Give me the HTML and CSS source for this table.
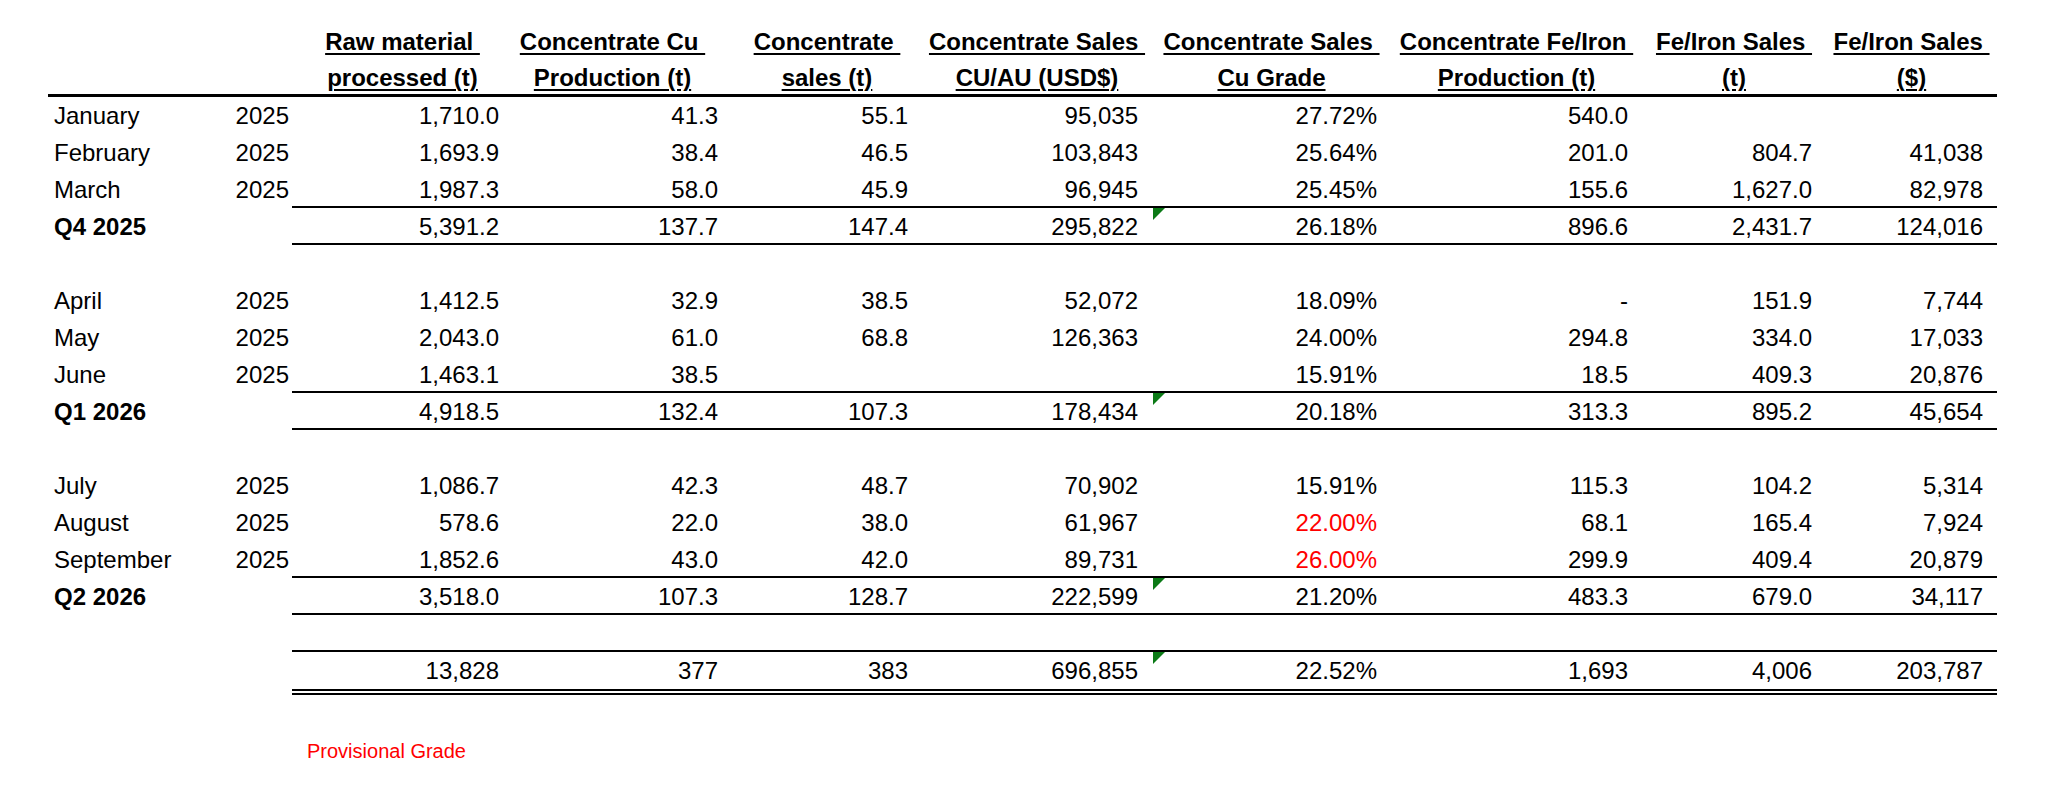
FILE: index.html
```html
<!DOCTYPE html>
<html lang="en">
<head>
<meta charset="utf-8">
<title>Production summary</title>
<link rel="stylesheet" href="styles.css">
</head>
<body>
<div class="sheet">
  <div class="row head">
    <div class="lbl"></div>
    <div class="yr"></div>
    <div class="vals">
      <div class="h"><span class="u">Raw material&nbsp;</span><br><span class="u">processed (t)</span></div>
      <div class="h h-cu"><span class="u">Concentrate Cu&nbsp;</span><br><span class="u">Production (t)</span></div>
      <div class="h"><span class="u">Concentrate&nbsp;</span><br><span class="u">sales (t)</span></div>
      <div class="h"><span class="u">Concentrate Sales&nbsp;</span><br><span class="u">CU/AU (USD$)</span></div>
      <div class="h"><span class="u">Concentrate Sales&nbsp;</span><br><span class="u">Cu Grade</span></div>
      <div class="h"><span class="u">Concentrate Fe/Iron&nbsp;</span><br><span class="u">Production (t)</span></div>
      <div class="h"><span class="u">Fe/Iron Sales&nbsp;</span><br><span class="u">(t)</span></div>
      <div class="h"><span class="u">Fe/Iron Sales&nbsp;</span><br><span class="u">($)</span></div>
    </div>
  </div>

  <div class="row">
    <div class="lbl">January</div><div class="yr">2025</div>
    <div class="vals"><span>1,710.0</span><span>41.3</span><span>55.1</span><span>95,035</span><span>27.72%</span><span>540.0</span><span></span><span></span></div>
  </div>
  <div class="row">
    <div class="lbl">February</div><div class="yr">2025</div>
    <div class="vals"><span>1,693.9</span><span>38.4</span><span>46.5</span><span>103,843</span><span>25.64%</span><span>201.0</span><span>804.7</span><span>41,038</span></div>
  </div>
  <div class="row line">
    <div class="lbl">March</div><div class="yr">2025</div>
    <div class="vals"><span>1,987.3</span><span>58.0</span><span>45.9</span><span>96,945</span><span>25.45%</span><span>155.6</span><span>1,627.0</span><span>82,978</span></div>
  </div>
  <div class="row line sub">
    <div class="lbl">Q4 2025</div><div class="yr"></div>
    <div class="vals"><span>5,391.2</span><span>137.7</span><span>147.4</span><span>295,822</span><span class="flag">26.18%</span><span>896.6</span><span>2,431.7</span><span>124,016</span></div>
  </div>
  <div class="row blank"></div>

  <div class="row">
    <div class="lbl">April</div><div class="yr">2025</div>
    <div class="vals"><span>1,412.5</span><span>32.9</span><span>38.5</span><span>52,072</span><span>18.09%</span><span class="dash">-</span><span>151.9</span><span>7,744</span></div>
  </div>
  <div class="row">
    <div class="lbl">May</div><div class="yr">2025</div>
    <div class="vals"><span>2,043.0</span><span>61.0</span><span>68.8</span><span>126,363</span><span>24.00%</span><span>294.8</span><span>334.0</span><span>17,033</span></div>
  </div>
  <div class="row line">
    <div class="lbl">June</div><div class="yr">2025</div>
    <div class="vals"><span>1,463.1</span><span>38.5</span><span></span><span></span><span>15.91%</span><span>18.5</span><span>409.3</span><span>20,876</span></div>
  </div>
  <div class="row line sub">
    <div class="lbl">Q1 2026</div><div class="yr"></div>
    <div class="vals"><span>4,918.5</span><span>132.4</span><span>107.3</span><span>178,434</span><span class="flag">20.18%</span><span>313.3</span><span>895.2</span><span>45,654</span></div>
  </div>
  <div class="row blank"></div>

  <div class="row">
    <div class="lbl">July</div><div class="yr">2025</div>
    <div class="vals"><span>1,086.7</span><span>42.3</span><span>48.7</span><span>70,902</span><span>15.91%</span><span>115.3</span><span>104.2</span><span>5,314</span></div>
  </div>
  <div class="row">
    <div class="lbl">August</div><div class="yr">2025</div>
    <div class="vals"><span>578.6</span><span>22.0</span><span>38.0</span><span>61,967</span><span class="red">22.00%</span><span>68.1</span><span>165.4</span><span>7,924</span></div>
  </div>
  <div class="row line">
    <div class="lbl">September</div><div class="yr">2025</div>
    <div class="vals"><span>1,852.6</span><span>43.0</span><span>42.0</span><span>89,731</span><span class="red">26.00%</span><span>299.9</span><span>409.4</span><span>20,879</span></div>
  </div>
  <div class="row line sub">
    <div class="lbl">Q2 2026</div><div class="yr"></div>
    <div class="vals"><span>3,518.0</span><span>107.3</span><span>128.7</span><span>222,599</span><span class="flag">21.20%</span><span>483.3</span><span>679.0</span><span>34,117</span></div>
  </div>
  <div class="row line">
    <div class="lbl"></div><div class="yr"></div>
    <div class="vals"><span></span><span></span><span></span><span></span><span></span><span></span><span></span><span></span></div>
  </div>

  <div class="row total">
    <div class="lbl"></div><div class="yr"></div>
    <div class="vals"><span>13,828</span><span>377</span><span>383</span><span>696,855</span><span class="flag">22.52%</span><span>1,693</span><span>4,006</span><span>203,787</span></div>
  </div>

  <div class="row note">
    <div class="lbl"></div><div class="yr"></div>
    <div class="note-text">Provisional Grade</div>
  </div>
</div>
</body>
</html>
```

FILE: styles.css
```css
html, body {
  margin: 0;
  padding: 0;
  background: #ffffff;
}

body {
  font-family: "Liberation Sans", Arial, sans-serif;
  font-size: 24px;
  color: #000000;
}

.sheet {
  padding: 24px 0 0 48px;
  width: 1949px;
}

.row {
  display: grid;
  grid-template-columns: 172px 72px 1705px;
  height: 37px;
  line-height: 37px;
}

.vals {
  display: grid;
  grid-template-columns: 221px 219px 190px 230px 239px 251px 184px 171px;
  box-sizing: border-box;
  height: 37px;
}

.vals > span {
  position: relative;
  text-align: right;
  padding-right: 14px;
  white-space: nowrap;
}

.lbl {
  padding-left: 6px;
  white-space: nowrap;
}

.yr {
  text-align: right;
  padding-right: 3px;
}

.sub .lbl {
  font-weight: bold;
}

.line .vals {
  border-bottom: 2px solid #000000;
}

/* header */
.head {
  height: 70px;
  line-height: 36px;
  border-bottom: 3px solid #000000;
}

.head .vals {
  height: 70px;
}

.h {
  text-align: center;
  font-weight: bold;
  white-space: nowrap;
}

.h-cu {
  padding-right: 20px;
}

.u {
  text-decoration: underline;
  text-decoration-thickness: 2px;
  text-underline-offset: 3px;
}

/* totals */
.total {
  height: 43px;
}

.total .vals {
  box-sizing: content-box;
  height: 37px;
  border-bottom: 6px double #000000;
}

.red {
  color: #ff0000;
}

.dash {
  padding-right: 18px;
}

.flag::before {
  content: "";
  position: absolute;
  left: 1px;
  top: 0;
  width: 0;
  height: 0;
  border-top: 12px solid #0b7a16;
  border-right: 12px solid transparent;
}

/* note */
.note {
  margin-top: 44px;
  height: 24px;
  line-height: 24px;
}

.note-text {
  padding-left: 15px;
  font-size: 20px;
  color: #ff0000;
  white-space: nowrap;
}
```
